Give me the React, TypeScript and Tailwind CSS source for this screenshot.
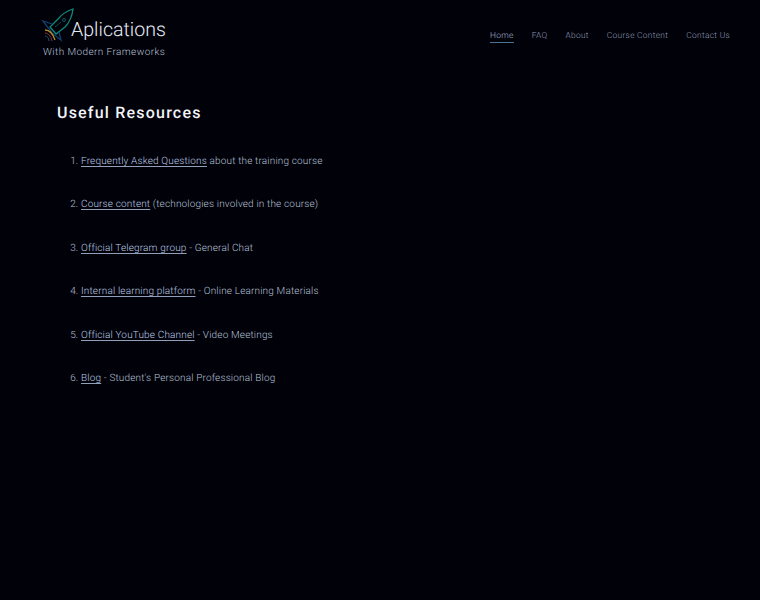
const navLinks = ["Home", "FAQ", "About", "Course Content", "Contact Us"];

const resources = [
  { label: "Frequently Asked Questions", rest: " about the training course" },
  { label: "Course content", rest: " (technologies involved in the course)" },
  { label: "Official Telegram group", rest: " - General Chat" },
  { label: "Internal learning platform", rest: " - Online Learning Materials" },
  { label: "Official YouTube Channel", rest: " - Video Meetings" },
  { label: "Blog", rest: " - Student's Personal Professional Blog" },
];

function RocketLogo() {
  return (
    <svg width="36" height="36" viewBox="0 0 36 36" fill="none" className="shrink-0">
      {/* body */}
      <path d="M32 2 C26 4 21 7 17 12 L9 20 L15 27 L24 20 C28 16 31 10 32 2 Z" stroke="#0e8a78" strokeWidth="1.3" />
      <circle cx="23" cy="13" r="1.5" stroke="#0f6f70" strokeWidth="0.8" />
      <path d="M14 20 L20 15" stroke="#0d5f62" strokeWidth="0.8" />
      {/* fins */}
      <path d="M11 17 L2 14 L11 26 L20 33 L18 25" stroke="#10406f" strokeWidth="1.3" />
      {/* flame */}
      <path d="M4 23 C8 23 12 27 14 33" stroke="#b8892a" strokeWidth="1.3" />
      <path d="M4 26 C7 26 10 29 11 34" stroke="#8f352c" strokeWidth="1" />
      <path d="M4 29 C6 29 8 31 8 34" stroke="#1c4f80" strokeWidth="1" />
    </svg>
  );
}

export default function App() {
  return (
    <div className="min-h-[600px] bg-[#01010a] font-['Roboto',sans-serif] font-light text-[#c3cfe0] [text-rendering:geometricPrecision]">
      <header className="flex items-start justify-between pl-[41px] pr-[30px] pt-[10px]">
        <div>
          <div className="flex items-end h-[33px]">
            <RocketLogo />
            <span className="-ml-[6px] text-[19.6px] leading-[26px] text-[#e6ebf3]">Aplications</span>
          </div>
          <div className="mt-[3px] ml-[2px] text-[10px] leading-[14px] tracking-[0.41px] text-[#b4c0d2]">
            With Modern Frameworks
          </div>
        </div>
        <nav className="flex gap-[18px] pt-[20px] text-[8.4px] tracking-[0.3px] text-[#8f9db4]">
          {navLinks.map((link, index) => (
            <a
              key={link}
              href="#"
              className={
                index === 0
                  ? "leading-[12px] text-[#a9bad1] border-b border-[#4d7294]"
                  : "leading-[12px] border-b border-transparent"
              }
            >
              {link}
            </a>
          ))}
        </nav>
      </header>

      <main className="pl-[57px] pt-[42px]">
        <h1 className="text-[16px] leading-[22px] font-medium tracking-[1.2px] text-[#f2f4f8]">Useful Resources</h1>
        <ol className="mt-[30px] flex flex-col gap-[28.4px] pl-[24px] list-decimal text-[10px] leading-[15px] tracking-[0.16px] text-[#b4c0d2]">
          {resources.map((item) => (
            <li key={item.label}>
              <a href="#" className="underline underline-offset-2 decoration-[#8fa0b8] text-[#bccbe0]">{item.label}</a>
              {item.rest}
            </li>
          ))}
        </ol>
      </main>
    </div>
  );
}
